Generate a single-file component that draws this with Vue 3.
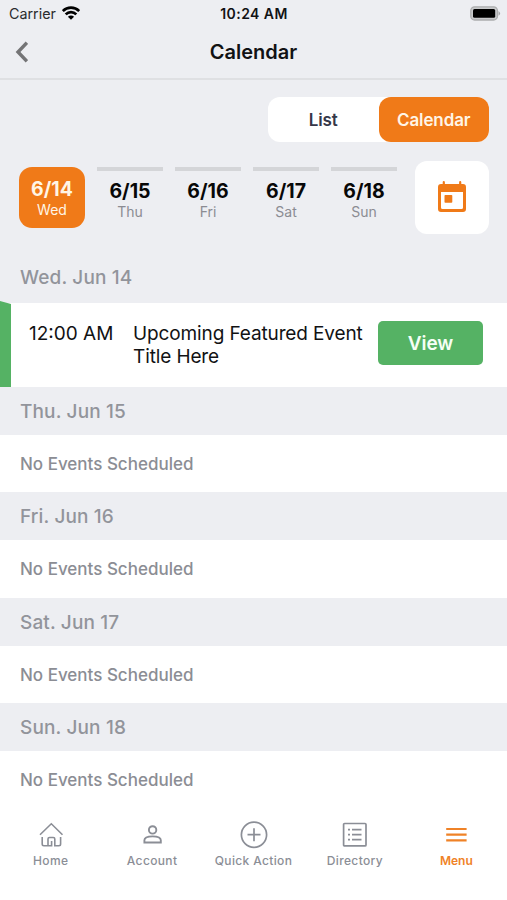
<script setup>
const days = [
  { date: '6/14', name: 'Wed', active: true },
  { date: '6/15', name: 'Thu' },
  { date: '6/16', name: 'Fri' },
  { date: '6/17', name: 'Sat' },
  { date: '6/18', name: 'Sun' },
]
const emptyDays = ['Thu. Jun 15', 'Fri. Jun 16', 'Sat. Jun 17', 'Sun. Jun 18']
</script>

<template>
  <div class="screen">
    <div class="status">
      <div class="carrier">
        <span>Carrier</span>
        <svg width="18" height="14" viewBox="0 0 18 14" fill="none" stroke="#000" stroke-width="2.700">
          <path d="M.8 5C5.300.6 12.700.6 17.200 5" />
          <path d="M3.700 8.400c3-3 7.600-3 10.600 0" />
          <path d="M9 13.700L5.900 10.700c1.700-1.600 4.500-1.600 6.200 0z" fill="#000" stroke="none" />
        </svg>
      </div>
      <span class="clock">10:24 AM</span>
      <svg class="battery" width="31" height="15" viewBox="0 0 31 15">
        <rect x=".8" y=".8" width="26.600" height="13.200" rx="3.800" fill="#c9cacc" stroke="#acadae" stroke-width="1.300" />
        <rect x="3" y="3" width="22.200" height="8.800" rx="1.500" />
        <path d="M28.500 5q3.200 2.400 0 4.800z" fill="#a5a6a8" />
      </svg>
    </div>
    <header class="nav">
      <svg class="back" width="14" height="22" viewBox="0 0 14 22" fill="none" stroke="#747476" stroke-width="3.400">
        <path d="M12.900 1.700L4 11l8.900 9.300" />
      </svg>
      <h1>Calendar</h1>
    </header>
    <div class="toggle">
      <button class="seg">List</button>
      <button class="seg on">Calendar</button>
    </div>
    <div class="days">
      <div v-for="d in days" :key="d.date" class="day" :class="{ active: d.active }">
        <span class="date">{{ d.date }}</span>
        <span class="dow">{{ d.name }}</span>
      </div>
      <button class="picker" aria-label="Pick date">
        <svg width="28" height="31" viewBox="0 0 28 31">
          <path d="M5.800 4V1.200M22.200 4V1.200" stroke="#f07a18" stroke-width="2.200" stroke-linecap="round" />
          <path fill="#f07a18" fill-rule="evenodd" d="M3 3h22a3 3 0 0 1 3 3v22a3 3 0 0 1-3 3H3a3 3 0 0 1-3-3V6a3 3 0 0 1 3-3zM3 11v15.500q0 1.500 1.500 1.500h19q1.500 0 1.500-1.500V11zM7.300 14h6.200q.8 0 .8.8v6.200q0 .8-.8.8H7.300q-.8 0-.8-.8v-6.200q0-.8.8-.8z" />
        </svg>
      </button>
    </div>
    <h2 class="first">Wed. Jun 14</h2>
    <div class="event">
      <svg class="marker" width="11" height="86" viewBox="0 0 11 86"><path d="M0 0L11 3V86H0z" fill="#55b264" /></svg>
      <span class="time">12:00 AM</span>
      <span class="title">Upcoming Featured Event<br />Title Here</span>
      <button class="view">View</button>
    </div>
    <section v-for="d in emptyDays" :key="d">
      <h2>{{ d }}</h2>
      <p>No Events Scheduled</p>
    </section>
    <nav class="tabs">
      <div class="tab">
        <svg width="28" height="28" viewBox="0 0 28 28" fill="none" stroke="#8b8e96" stroke-width="1.600">
          <path d="M3 13.800L14.300 2.800l11.200 11M5.200 16v7q0 1.700 1.700 1.700H11V18q0-1.500 1.500-1.500h3.800q1.500 0 1.500 1.500v6.700h4.100q1.700 0 1.700-1.700v-7M11 24.700h3.600V20" />
        </svg>
        <span>Home</span>
      </div>
      <div class="tab">
        <svg width="28" height="28" viewBox="0 0 28 28" fill="none" stroke="#8b8e96" stroke-width="1.900">
          <circle cx="14.600" cy="8.900" r="3.700" />
          <path d="M6.400 21.500v-2.200c0-5.200 16.400-5.200 16.400 0v2.200z" />
        </svg>
        <span>Account</span>
      </div>
      <div class="tab">
        <svg width="28" height="28" viewBox="0 0 28 28" fill="none" stroke="#8b8e96" stroke-width="1.700">
          <circle cx="14" cy="13.700" r="12.600" />
          <path d="M14 7.200v13M7.500 13.700h13" />
        </svg>
        <span>Quick Action</span>
      </div>
      <div class="tab">
        <svg width="28" height="28" viewBox="0 0 28 28" fill="none" stroke="#8b8e96" stroke-width="1.700">
          <rect x="2.600" y="2.500" width="22.400" height="22.400" rx="1" />
          <path d="M11 8.700h9.500M11 13.700h9.500M11 18.700h9.500M7 8.700h2M7 13.700h2M7 18.700h2" />
        </svg>
        <span>Directory</span>
      </div>
      <div class="tab on">
        <svg width="28" height="28" viewBox="0 0 28 28" fill="none" stroke="#ef8227" stroke-width="2.200">
          <path d="M4.200 8h20.400M4.200 13.700h20.400M4.200 19.400h20.400" />
        </svg>
        <span>Menu</span>
      </div>
    </nav>
  </div>
</template>

<style>
body { margin: 0; background: #fff; }
</style>

<style scoped>
.screen { width: 507px; height: 900px; overflow: hidden; background: #edeef2; font-family: Inter, "Liberation Sans", sans-serif; color: #111214; display: flex; flex-direction: column; }
.screen * { box-sizing: border-box; }
h1, h2, p { margin: 0; }
button { border: 0; padding: 0; font: inherit; }
svg { display: block; flex: none; }
.status { height: 28px; flex: none; display: grid; grid-template-columns: 1fr auto 1fr; align-items: center; padding: 0 6px 1px 9px; }
.carrier { display: flex; align-items: center; gap: 6px; font-size: 14.300px; color: #2a2b2d; }
.carrier svg { margin-top: -2px; }
.clock { font-size: 14px; font-weight: 600; letter-spacing: .45px; margin-right: 2px; }
.battery { justify-self: end; }
.nav { height: 52px; flex: none; border-bottom: 2px solid #dfe0e3; display: grid; grid-template-columns: 60px 1fr 60px; align-items: center; padding-bottom: 2px; }
.back { margin-left: 14px; }
h1 { text-align: center; font-size: 20px; font-weight: 600; line-height: 24px; }
.toggle { width: 221px; height: 45px; flex: none; margin: 17px 18px 0 auto; background: #fff; border-radius: 12px; display: flex; }
.seg { flex: 1; border-radius: 12px; background: none; color: #353748; font-size: 17px; font-weight: 600; letter-spacing: -.1px; }
.seg.on { background: #f07a18; color: #fff5e6; }
.days { display: flex; flex: none; height: 73px; margin: 19px 18px 0 19px; }
.day { width: 66px; height: 61px; margin: 6px 12px 0 0; border-top: 4px solid #d4d5d8; display: flex; flex-direction: column; align-items: center; padding-top: 8px; }
.day.active { background: #f07a18; border: 0; border-radius: 13px; padding-top: 10px; color: #fff5e6; }
.date { font-size: 19.500px; line-height: 24px; font-weight: 700; color: #080808; }
.dow { font-size: 14px; line-height: 17px; color: #8b8c92; }
.active .date, .active .dow { color: inherit; }
.picker { margin-left: auto; width: 74px; height: 73px; background: #fff; border-radius: 12px; display: flex; align-items: center; justify-content: center; padding-bottom: 2px; }
h2 { height: 48px; flex: none; padding-left: 20px; font-size: 19px; line-height: 49px; font-weight: 550; letter-spacing: .14px; color: #92949b; }
h2.first { margin-top: 19px; height: 50px; }
.event { flex: none; height: 83.600px; background: #fff; display: flex; align-items: flex-start; font-size: 19px; line-height: 23px; }
.marker { margin-top: -2px; }
.time { width: 104px; margin: 19px 0 0 18px; white-space: nowrap; }
.title { width: 245px; margin-top: 19px; white-space: nowrap; letter-spacing: -.12px; }
.view { width: 105px; height: 44px; margin-top: 18px; border-radius: 5px; background: #55b264; color: #f5fff5; font-size: 19px; font-weight: 600; letter-spacing: -.1px; }
section { height: 105.500px; flex: none; background: #fff; }
section h2 { background: #edeef2; }
p { padding-left: 20px; font-size: 17px; line-height: 58.600px; height: 57.500px; font-weight: 500; color: #8b8d94; }
.tabs { flex: 1; background: #fff; display: flex; padding-top: 12px; }
.tab { flex: 1; display: flex; flex-direction: column; align-items: center; gap: 4px; color: #8b8e96; font-size: 12px; line-height: 15px; font-weight: 550; letter-spacing: .35px; white-space: nowrap; }
.tab.on { color: #ef8227; font-weight: 600; letter-spacing: 0; }
</style>
